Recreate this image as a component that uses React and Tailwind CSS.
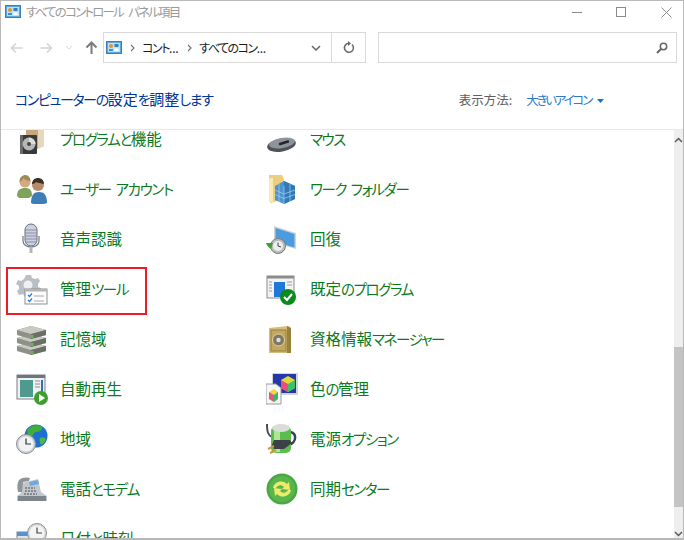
import React from "react";

const CpIcon = () => (
  <svg width="16" height="16" viewBox="0 0 16 16" className="shrink-0">
    <rect x="0.5" y="1.5" width="15" height="12" fill="#5aa9dc" stroke="#3f7fae" />
    <rect x="2" y="3" width="12" height="9" fill="#bfe0f2" />
    <circle cx="5" cy="6" r="2" fill="#e8912d" />
    <rect x="8.5" y="4" width="4" height="3" fill="#2f7fbf" />
    <rect x="3" y="9" width="4" height="2" fill="#3f8fcf" />
    <rect x="8.5" y="8.5" width="4" height="2.5" fill="#fff" />
  </svg>
);

const S = ({ children }) => (
  <svg width="32" height="32" viewBox="0 0 32 32" className="shrink-0">
    {children}
  </svg>
);

const Programs = () => (
  <S>
    <path d="M10 -2h15l3 2v23l-7 3H10z" fill="#c7a87c" />
    <path d="M22 -2h6v25l-6 3z" fill="#e6d7bd" />
    <rect x="4" y="12" width="17" height="19" rx="1" fill="#3a3a3a" />
    <path d="M4 12h3v19H4z" fill="#6a6a6a" />
    <circle cx="13" cy="21" r="6.500" fill="#b5b8b8" />
    <path d="M13 14.500a6.500 6.500 0 0 1 6.500 6.500H13z" fill="#dedfd8" />
    <circle cx="13" cy="21" r="2" fill="#454545" />
  </S>
);
const Mouse = () => (
  <S>
    <ellipse cx="15.500" cy="22" rx="14.500" ry="6.500" fill="#4f5358" transform="rotate(-10 15.500 22)" />
    <ellipse cx="16" cy="20" rx="13" ry="5" fill="#8d949b" transform="rotate(-10 16 20)" />
    <path d="M14 21l8-2.500" stroke="#24262a" strokeWidth="2.500" strokeLinecap="round" />
  </S>
);
const Users = () => (
  <S>
    <path d="M1 23c0-6 3-8 8-8s7 2 7 8l-3 2H3z" fill="#7ea45b" />
    <circle cx="9" cy="9" r="5.500" fill="#d4a982" />
    <path d="M3.500 9c0-5 3-7 6-7s5 3 5 6c-3 0-6-1-7-3-1 2-2 3-4 4z" fill="#a08a5a" />
    <path d="M15 30c0-8 3-11 8-11s8 3 8 11l-3 1H17z" fill="#3f7db5" />
    <circle cx="22" cy="12" r="6" fill="#b98a68" />
    <path d="M16 11c0-4 3-6 6-6s6 2 6 6c-3-1-7-1-8-2-1 1-2 2-4 2z" fill="#3a3028" />
  </S>
);
const Folder = () => (
  <S>
    <path d="M3 2h13l2 4v20L5 30l-2-2z" fill="#eccf7c" />
    <path d="M3 5h4v24H3z" fill="#f8e9b6" />
    <path d="M9 13l9-5 11 5v13l-11 5-9-4z" fill="#4d94cf" />
    <path d="M18 8l11 5v13l-11 5z" fill="#2f79b8" />
    <path d="M9 17l9 4 11-4M9 21.500l9 4 11-4M13 11v18M18 13v18M24 11v18" stroke="#9cc9ec" strokeWidth="0.800" fill="none" />
  </S>
);
const Mic = () => (
  <S>
    <path d="M7 13v5c0 4 4 6 8 6s8-2 8-6v-5" fill="none" stroke="#777" strokeWidth="1.200" />
    <rect x="9" y="1" width="12" height="22" rx="6" fill="#cdd0de" stroke="#666a82" />
    <path d="M9 7h12M9 10h12M9 13h12M9 16h12M9 19h12" stroke="#8a8da5" />
    <path d="M15 24v6" stroke="#b5b5b5" strokeWidth="3" />
  </S>
);
const Recovery = () => (
  <S>
    <path d="M8 3l22 7v16L8 20z" fill="#cdd3d8" />
    <path d="M9.500 5l19 6v13.500l-19-5.500z" fill="#4a9be0" />
    <circle cx="12" cy="23" r="7.500" fill="#bcbcbc" stroke="#7c7c7c" />
    <circle cx="12" cy="23" r="5" fill="#eee" />
    <path d="M12 19.500V23l3 1" stroke="#444" fill="none" />
    <path d="M0 20l7 0-2 6c-2-1-4-3-5-6z" fill="#3f9f38" />
  </S>
);
const Tools = () => (
  <S>
    <path d="M10 2h5l1 3 3 1 3-1 2 3-2 3v3l3 1v2h-6L9 24l-2-3-4 1-2-4 2-2v-3l-3-2 2-4 3 1 3-2z" fill="#b9bfc4" />
    <circle cx="12" cy="12" r="4.500" fill="#eef0f2" />
    <rect x="9" y="16" width="22" height="15" fill="#fbfbfb" stroke="#8f8f8f" />
    <rect x="9" y="16" width="22" height="2.500" fill="#b5b5b5" />
    <path d="M12 22l1.500 1.500 2.500-3M12 27l1.500 1.500 2.500-3" stroke="#2a7fd0" strokeWidth="1.300" fill="none" />
    <path d="M18 23h10M18 28h10" stroke="#a8a8a8" />
  </S>
);
const Defaults = () => (
  <S>
    <rect x="1" y="3" width="27" height="22" fill="#f3f3f3" stroke="#8c8c8c" />
    <rect x="1" y="3" width="27" height="2.500" fill="#8c8c8c" />
    <path d="M8 9h11v15H8z" fill="#1f78d8" />
    <path d="M3 9h3M3 12h3M3 15h3M3 18h3M21 9h5M21 12h5" stroke="#9a9a9a" />
    <circle cx="22" cy="24" r="8" fill="#0b8a1d" />
    <path d="M18 24l3 3 5-6" stroke="#fff" strokeWidth="2" fill="none" />
  </S>
);
const Disks = () => (
  <S>
    {[18, 10, 2].map((y) => (
      <g key={y}>
        <path d={`M1 ${y + 5}l14-4 15 4v5l-15 4-14-4z`} fill="#8e9286" />
        <path d={`M1 ${y + 5}l14-4 15 4-15 4z`} fill="#c9cbc3" />
        <path d={`M15 ${y + 9}l15-4v5l-15 4z`} fill="#6c6f66" />
        <rect x="15" y={y + 10} width="2.500" height="3" fill="#59c04c" />
      </g>
    ))}
  </S>
);
const Vault = () => (
  <S>
    <path d="M3 5l19-2 3 2v25H3z" fill="#d6bc78" />
    <path d="M21 3l4 2v25h-4z" fill="#98803f" />
    <rect x="5" y="7" width="15" height="21" fill="#c3a75f" stroke="#97803f" />
    <circle cx="12.500" cy="17" r="6" fill="#7d7864" stroke="#e2d39c" />
    <circle cx="12.500" cy="17" r="2.200" fill="#ddd" />
  </S>
);
const AutoPlay = () => (
  <S>
    <rect x="1" y="2" width="28" height="24" fill="#eff1f2" stroke="#7a7f84" />
    <rect x="1" y="2" width="28" height="3" fill="#6f757a" />
    <rect x="4" y="7" width="13" height="17" fill="#4e9a8f" />
    <path d="M19 8h5M19 11h5M19 14h5" stroke="#8a8f94" />
    <rect x="25" y="7" width="2" height="12" fill="#2f6fb0" />
    <circle cx="25" cy="25" r="7" fill="#3f9f2e" />
    <path d="M23 21l6 4-6 4z" fill="#fff" />
  </S>
);
const Color = () => (
  <S>
    <rect x="6" y="0" width="26" height="22" rx="1" fill="#cfd4d8" />
    <rect x="7" y="1" width="23" height="19" fill="#2538a8" />
    <path d="M15 7l7-4 7 4v8l-7 4-7-4z" fill="#e2d83c" />
    <path d="M15 7l7 4v8l-7-4z" fill="#e84f7b" />
    <path d="M22 11l7-4v8l-7 4z" fill="#39c26a" />
    <path d="M0 11h10l5 4v16H0z" fill="#f6f6f6" stroke="#9a9a9a" />
    <path d="M3 19l5-3 4 3v7l-4 3-5-3z" fill="#ead84a" />
    <path d="M3 19l5 3v7l-5-3z" fill="#e5567f" />
    <path d="M8 22l4-3v7l-4 3z" fill="#35b968" />
  </S>
);
const Globe = () => (
  <S>
    <circle cx="20" cy="13" r="11.500" fill="#1f6fd0" />
    <path d="M11 7c4-5 11-6 15-3 1 3-3 5-6 5s-2 4-5 5-3-3-4-7z" fill="#3fae3b" />
    <path d="M24 15c3-1 5 0 6 1-1 3-3 5-5 6-1-2-2-5-1-7z" fill="#4db84a" />
    <circle cx="10" cy="21" r="9.500" fill="#cfd3d6" stroke="#8a8f93" />
    <circle cx="10" cy="21" r="7.500" fill="#f1f2f3" />
    <path d="M10 15.500V21h5" stroke="#33383c" strokeWidth="1.200" fill="none" />
  </S>
);
const Power = () => (
  <S>
    <path d="M1 1c0 8 1 11 5 13" stroke="#46505a" strokeWidth="2" fill="none" />
    <path d="M24 9c7 1 7 10-1 13" stroke="#39435a" strokeWidth="2.500" fill="none" />
    <rect x="5" y="3" width="20" height="27" rx="5" fill="#5cbd4f" />
    <rect x="8" y="5" width="6" height="24" fill="#aee596" />
    <ellipse cx="15" cy="5" rx="9" ry="4" fill="#d9dcd9" />
    <path d="M8 17h16l2 3-8 6H8l-2-4z" fill="#3c4048" />
    <path d="M2 26l6-3M4 30l6-3" stroke="#c89a3a" strokeWidth="2" />
  </S>
);
const Phone = () => (
  <S>
    <path d="M6 10l16-4 3 13 6 4v5H1v-5l4-3z" fill="#c2c7cb" />
    <path d="M3 7c3-3 8-3 11-2l-1 3-6 1-1 10H2c-1-4-1-9 1-12z" fill="#8f959a" />
    <path d="M13 9l9-2 1 4-9 2z" fill="#6fa8e0" />
    <rect x="2" y="23" width="28" height="5" fill="#7c858c" />
    <path d="M9 15h10M9 18h11M8 21h13" stroke="#70777d" strokeWidth="1.500" strokeDasharray="2 1" />
  </S>
);
const Sync = () => (
  <S>
    <circle cx="16" cy="16" r="15.500" fill="#4aa841" />
    <circle cx="16" cy="16" r="13" fill="#58b64c" />
    <path d="M7 15c1-6 9-9 14-4l2-2 1 8-8-1 2-2c-3-3-6-2-8 1z" fill="#ecec6a" />
    <path d="M25 17c-1 6-9 9-14 4l-2 2-1-8 8 1-2 2c3 3 6 2 8-1z" fill="#ecec6a" />
  </S>
);
const DateTime = () => (
  <S>
    <rect x="1" y="9" width="24" height="18" fill="#dce3ea" stroke="#7d8891" />
    <rect x="1" y="9" width="24" height="4" fill="#5a93c9" />
    <circle cx="21" cy="10" r="9.500" fill="#d8dadc" stroke="#8a8f93" />
    <circle cx="21" cy="10" r="7.500" fill="#f4f4f4" />
    <path d="M21 4.500V10h5" stroke="#444" strokeWidth="1.200" fill="none" />
  </S>
);

const rows = [
  [Programs, "プログラムと機能", Mouse, "マウス"],
  [Users, "ユーザー アカウント", Folder, "ワーク フォルダー"],
  [Mic, "音声認識", Recovery, "回復"],
  [Tools, "管理ツール", Defaults, "既定のプログラム"],
  [Disks, "記憶域", Vault, "資格情報マネージャー"],
  [AutoPlay, "自動再生", Color, "色の管理"],
  [Globe, "地域", Power, "電源オプション"],
  [Phone, "電話とモデム", Sync, "同期センター"],
  [DateTime, "日付と時刻", null, ""],
];

// Kana runs are set tighter than kanji, as the reference's UI face draws them.
const Mixed = ({ text, kanaClass }) =>
  text.split(/([\u3040-\u30ff ]+)/).map((part, i) =>
    /^[\u3040-\u30ff ]+$/.test(part) ? (
      <span key={i} className={kanaClass}>
        {part}
      </span>
    ) : (
      part
    ),
  );

const Item = ({ Icon, label }) => (
  <div className="flex h-[50px] items-center">
    <div className="w-8 shrink-0">{Icon ? <Icon /> : null}</div>
    <span className="ml-3 pb-[2px] whitespace-nowrap text-[15.5px] leading-[20px] text-[#0a7a1e] [font-feature-settings:'palt']">
      <Mixed text={label} kanaClass="text-[14.5px] tracking-[-1.4px] [word-spacing:3px]" />
    </span>
  </div>
);

export default function App() {
  return (
    <div
      className="relative flex h-[540px] w-[684px] flex-col overflow-hidden border border-b-2 border-[#b9b9b9] bg-white"
      style={{ fontFamily: '"Noto Sans CJK JP", "Noto Sans", sans-serif' }}
    >
      {/* title bar */}
      <div className="flex h-[22px] shrink-0 items-center pl-1">
        <CpIcon />
        <span className="ml-[5px] text-[12.5px] tracking-[-1.8px] text-[#9a9a9a] [word-spacing:4px] [font-feature-settings:'palt']">すべてのコントロール パネル項目</span>
        <div className="ml-auto flex items-center pr-[11px]">
          <div className="h-px w-[10px] bg-[#8a8a8a]" />
          <div className="ml-[34px] h-[10px] w-[10px] border border-[#8a8a8a]" />
          <svg width="11" height="11" viewBox="0 0 11 11" className="ml-[35px]">
            <path d="M.5.5l10 10M10.500.5l-10 10" stroke="#8a8a8a" fill="none" />
          </svg>
        </div>
      </div>

      {/* navigation bar */}
      <div className="mt-[9px] flex h-[31px] shrink-0 items-center">
        <div className="flex w-[102px] items-center pl-[9px]">
          <svg width="13" height="12" viewBox="0 0 13 12">
            <path d="M12.500 6H1.500M6 1.500L1.500 6 6 10.500" stroke="#d4d4d4" strokeWidth="1.600" fill="none" />
          </svg>
          <svg width="13" height="12" viewBox="0 0 13 12" className="ml-[17px]">
            <path d="M.5 6h11M7 1.500L11.500 6 7 10.500" stroke="#d4d4d4" strokeWidth="1.600" fill="none" />
          </svg>
          <svg width="8" height="5" viewBox="0 0 8 5" className="ml-[12px]">
            <path d="M1 1l3 3 3-3" stroke="#d8d8d8" fill="none" />
          </svg>
          <svg width="13" height="13" viewBox="0 0 13 13" className="ml-[12px]">
            <path d="M6.500 13V2M1.500 6.500l5-5 5 5" stroke="#7a7a7a" strokeWidth="2" fill="none" />
          </svg>
        </div>
        <div className="flex h-full w-[263px] items-center border border-[#d9d9d9]">
          <div className="ml-[2px]">
            <CpIcon />
          </div>
          <svg width="5" height="8" viewBox="0 0 5 8" className="ml-[8px]">
            <path d="M1 1l3 3-3 3" stroke="#777" strokeWidth="1.200" fill="none" />
          </svg>
          <span className="ml-[7px] text-[12px] tracking-[-1.4px] text-[#1a1a1a] [font-feature-settings:'palt']">
            コント<span className="tracking-[-0.3px]">...</span>
          </span>
          <svg width="5" height="8" viewBox="0 0 5 8" className="ml-[9px]">
            <path d="M1 1l3 3-3 3" stroke="#777" strokeWidth="1.200" fill="none" />
          </svg>
          <span className="ml-[7px] text-[12px] tracking-[-1.5px] text-[#1a1a1a] [font-feature-settings:'palt']">
            すべてのコン<span className="tracking-[-0.3px]">...</span>
          </span>
          <div className="ml-auto flex h-full w-[34px] items-center justify-end border-r border-[#d9d9d9] pr-[10px]">
            <svg width="10" height="6" viewBox="0 0 10 6">
              <path d="M1 1l4 4 4-4" stroke="#666" strokeWidth="1.500" fill="none" />
            </svg>
          </div>
          <div className="flex h-full w-[33px] items-center justify-center">
            <svg width="12" height="13" viewBox="0 0 12 13">
              <path d="M9 3.500a4.500 4.500 0 1 1-3-1.200" stroke="#666" strokeWidth="1.500" fill="none" />
              <path d="M5 0l3 2.500L5 5z" fill="#666" />
            </svg>
          </div>
        </div>
        <div className="ml-3 flex h-full w-[299px] items-center justify-end border border-[#d9d9d9] pr-2">
          <svg width="12" height="12" viewBox="0 0 12 12">
            <circle cx="7.500" cy="4.500" r="3.200" stroke="#666" strokeWidth="1.500" fill="none" />
            <path d="M5 7l-4 4" stroke="#666" strokeWidth="2" />
          </svg>
        </div>
      </div>

      {/* heading row */}
      <div className="flex h-[67px] shrink-0 items-center border-b border-[#dfeaf2] pt-[6px] pl-[14px]">
        <span className="text-[15px] text-[#003399] [font-feature-settings:'palt']">
          <Mixed text="コンピューターの設定を調整します" kanaClass="text-[14px] tracking-[-1.4px]" />
        </span>
        <div className="ml-auto flex items-center pt-[3px] pr-[79px]">
          <span className="text-[12.5px] text-[#5e5e5e] [font-feature-settings:'palt']">表示方法:</span>
          <span className="ml-[14px] text-[12.5px] tracking-[-2.2px] text-[#2f78d0] [font-feature-settings:'palt']">大きいアイコン</span>
          <svg width="7" height="4" viewBox="0 0 7 4" className="ml-[6px]">
            <path d="M0 0h7L3.500 4z" fill="#1a6fc9" />
          </svg>
        </div>
      </div>

      {/* item list */}
      <div className="flex min-h-0 flex-1">
        <div className="min-w-0 flex-1 overflow-hidden">
          <div className="-mt-[16px] grid grid-cols-[250px_1fr] pl-[15px]">
            {rows.map((r, i) => (
              <React.Fragment key={i}>
                <Item Icon={r[0]} label={r[1]} />
                <Item Icon={r[2]} label={r[3]} />
              </React.Fragment>
            ))}
          </div>
        </div>
        <div className="relative flex w-[9px] shrink-0 flex-col bg-[#eeeeee]">
          <svg width="9" height="6" viewBox="0 0 9 6" className="mt-[7px]">
            <path d="M1 5l3.500-3.500L8 5" stroke="#5a5a5a" strokeWidth="1.500" fill="none" />
          </svg>
          <div className="mt-[204px] h-[160px] bg-[#c4c4c4]" />
          <svg width="9" height="6" viewBox="0 0 9 6" className="mt-[24px]">
            <path d="M1 1l3.500 3.500L8 1" stroke="#5a5a5a" strokeWidth="1.500" fill="none" />
          </svg>
        </div>
      </div>

      {/* annotation */}
      <div className="absolute top-[266px] left-[5px] h-[48px] w-[141px] border-2 border-[#ed1c24]" />
    </div>
  );
}
